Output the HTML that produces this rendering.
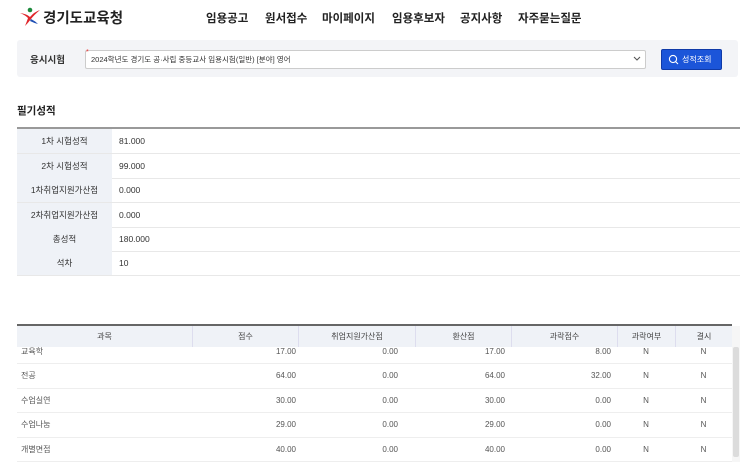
<!DOCTYPE html>
<html><head><meta charset="utf-8"><style>
*{margin:0;padding:0;box-sizing:border-box}
body{width:743px;height:469px;overflow:hidden;background:#fff;font-family:"Liberation Sans","Noto Sans CJK KR",sans-serif;color:#222;position:relative}
.a{position:absolute;white-space:nowrap}
.nav{top:10px;font-size:11.5px;font-weight:bold;color:#222}
.lbl{left:17px;width:95px;background:#eff2f7;text-align:center;font-size:8.5px;color:#333;height:24px;line-height:24px}
.val{left:119px;font-size:8.5px;color:#333;line-height:24px}
.hl{left:17px;width:723px;height:1px;background:#e8e8e8}
.th{top:326px;height:21px;line-height:21px;font-size:8px;color:#444;text-align:center}
</style></head><body>
<svg class="a" style="left:19px;top:7px" width="22" height="20" viewBox="0 0 22 20">
<circle cx="11" cy="3" r="2.3" fill="#1c8a3c"/>
<path d="M1 6 Q8 7 11 10 Q15 5 21 3 Q15 8 12 12 Q9 16 6 19 Q8 14 9 11 Q6 8 1 6Z" fill="#e0262b"/>
<path d="M12 12 Q16 14 19 17 Q15 16 11 14Z" fill="#1f4fb4"/>
</svg>
<div class="a" style="left:43px;top:7px;font-size:14.5px;font-weight:bold;color:#222">경기도교육청</div>
<div class="a nav" style="left:206px">임용공고</div>
<div class="a nav" style="left:265px">원서접수</div>
<div class="a nav" style="left:322px">마이페이지</div>
<div class="a nav" style="left:392px">임용후보자</div>
<div class="a nav" style="left:460px">공지사항</div>
<div class="a nav" style="left:518px">자주묻는질문</div>

<div class="a" style="left:17px;top:40px;width:721px;height:37px;background:#f3f4f7;border-radius:3px"></div>
<div class="a" style="left:30px;top:52px;font-size:9.5px;font-weight:bold;color:#333">응시시험</div>
<div class="a" style="left:85px;top:50px;width:561px;height:19px;background:#fff;border:1px solid #ccc;border-radius:2px"></div>
<div class="a" style="left:86px;top:49px;font-size:7px;color:#e33">*</div>
<div class="a" style="left:91px;top:54px;font-size:7.5px;color:#333">2024학년도 경기도 공·사립 중등교사 임용시험(일반) [분야] 영어</div>
<svg class="a" style="left:633px;top:56px" width="8" height="6"><path d="M1 1 L4 4 L7 1" stroke="#555" fill="none" stroke-width="1.1"/></svg>
<div class="a" style="left:661px;top:49px;width:61px;height:21px;background:#1b55d9;border:1px solid #0f3aa8;border-radius:2px"></div>
<svg class="a" style="left:668px;top:54px" width="11" height="11"><circle cx="5" cy="5" r="3.6" stroke="#fff" fill="none" stroke-width="1.1"/><path d="M7.6 7.6 L10 10" stroke="#fff" stroke-width="1.1"/></svg>
<div class="a" style="left:682px;top:54px;font-size:8px;color:#fff">성적조회</div>

<div class="a" style="left:17px;top:103px;font-size:10.5px;font-weight:bold;color:#222">필기성적</div>
<div class="a" style="left:17px;top:127px;width:723px;height:2px;background:#999"></div>
<div class="a lbl" style="top:129px">1차 시험성적</div><div class="a val" style="top:129px">81.000</div>
<div class="a hl" style="top:153px"></div>
<div class="a lbl" style="top:154px">2차 시험성적</div><div class="a val" style="top:154px">99.000</div>
<div class="a hl" style="top:178px"></div>
<div class="a lbl" style="top:178px">1차취업지원가산점</div><div class="a val" style="top:178px">0.000</div>
<div class="a hl" style="top:202px"></div>
<div class="a lbl" style="top:203px">2차취업지원가산점</div><div class="a val" style="top:203px">0.000</div>
<div class="a hl" style="top:227px"></div>
<div class="a lbl" style="top:227px">총성적</div><div class="a val" style="top:227px">180.000</div>
<div class="a hl" style="top:251px"></div>
<div class="a lbl" style="top:251px">석차</div><div class="a val" style="top:251px">10</div>
<div class="a hl" style="top:275px"></div>

<div class="a" style="left:17px;top:324px;width:715px;height:2px;background:#666"></div>
<div class="a" style="left:17px;top:326px;width:715px;height:21px;background:#eff2f7"></div>
<div class="a" style="left:732px;top:326px;width:8px;height:136px;background:#f6f6f6"></div>
<div class="a" style="left:733px;top:347px;width:6px;height:110px;background:#dcdcdc;border-radius:2px"></div>
<div class="a th" style="left:17px;width:175px">과목</div>
<div class="a th" style="left:192px;width:106px;border-left:1px solid #dde">점수</div>
<div class="a th" style="left:298px;width:117px;border-left:1px solid #dde">취업지원가산점</div>
<div class="a th" style="left:415px;width:96px;border-left:1px solid #dde">환산점</div>
<div class="a th" style="left:511px;width:106px;border-left:1px solid #dde">과락점수</div>
<div class="a th" style="left:617px;width:58px;border-left:1px solid #dde">과락여부</div>
<div class="a th" style="left:675px;width:57px;border-left:1px solid #dde">결시</div>

<div style="position:absolute;left:0;top:347px;width:743px;height:115px;overflow:hidden">
<table style="position:absolute;left:17px;top:-8px;width:715px;border-collapse:collapse;font-size:8px;color:#555">
<colgroup><col style="width:175px"><col style="width:106px"><col style="width:117px"><col style="width:96px"><col style="width:106px"><col style="width:58px"><col style="width:57px"></colgroup>
<tr style="height:24.5px;border-bottom:1px solid #eee"><td style="padding-left:4px">교육학</td><td align=right style="padding-right:2px">17.00</td><td align=right style="padding-right:17px">0.00</td><td align=right style="padding-right:6px">17.00</td><td align=right style="padding-right:6px">8.00</td><td align=center>N</td><td align=center>N</td></tr>
<tr style="height:24.5px;border-bottom:1px solid #eee"><td style="padding-left:4px">전공</td><td align=right style="padding-right:2px">64.00</td><td align=right style="padding-right:17px">0.00</td><td align=right style="padding-right:6px">64.00</td><td align=right style="padding-right:6px">32.00</td><td align=center>N</td><td align=center>N</td></tr>
<tr style="height:24.5px;border-bottom:1px solid #eee"><td style="padding-left:4px">수업실연</td><td align=right style="padding-right:2px">30.00</td><td align=right style="padding-right:17px">0.00</td><td align=right style="padding-right:6px">30.00</td><td align=right style="padding-right:6px">0.00</td><td align=center>N</td><td align=center>N</td></tr>
<tr style="height:24.5px;border-bottom:1px solid #eee"><td style="padding-left:4px">수업나눔</td><td align=right style="padding-right:2px">29.00</td><td align=right style="padding-right:17px">0.00</td><td align=right style="padding-right:6px">29.00</td><td align=right style="padding-right:6px">0.00</td><td align=center>N</td><td align=center>N</td></tr>
<tr style="height:24.5px;border-bottom:1px solid #eee"><td style="padding-left:4px">개별면접</td><td align=right style="padding-right:2px">40.00</td><td align=right style="padding-right:17px">0.00</td><td align=right style="padding-right:6px">40.00</td><td align=right style="padding-right:6px">0.00</td><td align=center>N</td><td align=center>N</td></tr>
</table></div>
</body></html>
